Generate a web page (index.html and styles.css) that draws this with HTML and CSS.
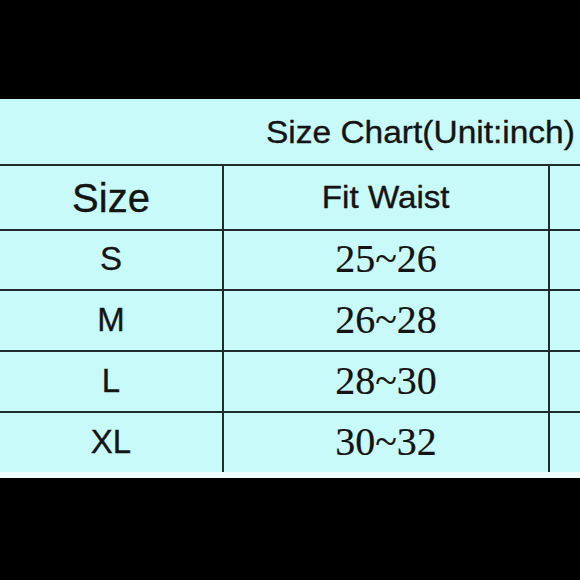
FILE: index.html
```html
<!DOCTYPE html>
<html>
<head>
<meta charset="utf-8">
<link rel="stylesheet" href="styles.css">
</head>
<body>
<div class="sheet">
  <div class="title"><span class="title-text">Size Chart(Unit:inch)</span></div>
  <div class="row head">
    <div class="cell c1"><span class="size-head">Size</span></div>
    <div class="cell c2"><span class="waist-head">Fit Waist</span></div>
    <div class="cell c3"></div>
  </div>
  <div class="row r60">
    <div class="cell c1 lbl">S</div>
    <div class="cell c2 num">25~26</div>
    <div class="cell c3"></div>
  </div>
  <div class="row r61">
    <div class="cell c1 lbl">M</div>
    <div class="cell c2 num">26~28</div>
    <div class="cell c3"></div>
  </div>
  <div class="row r61">
    <div class="cell c1 lbl">L</div>
    <div class="cell c2 num">28~30</div>
    <div class="cell c3"></div>
  </div>
  <div class="row r61">
    <div class="cell c1 lbl">XL</div>
    <div class="cell c2 num">30~32</div>
    <div class="cell c3"></div>
  </div>
  <div class="strip"></div>
</div>
</body>
</html>
```
FILE: styles.css
```css
html, body {
  margin: 0;
  padding: 0;
  background: #000;
  width: 580px;
  height: 580px;
  overflow: hidden;
}
.sheet {
  margin-top: 99px;
  background: #c9fafa;
  color: #141414;
  font-family: "Liberation Sans", Arial, sans-serif;
  -webkit-text-stroke: 0.35px #141414;
}
.title {
  height: 65px;
  display: flex;
  align-items: center;
  padding-left: 266px;
  box-sizing: border-box;
  padding-top: 2px;
  white-space: nowrap;
  overflow: hidden;
}
.title-text {
  display: inline-block;
  font-size: 31px;
  transform: scaleX(1.08);
  transform-origin: left center;
}
.row {
  display: flex;
  border-top: 2px solid #1f2b2d;
  box-sizing: border-box;
}
.row.head { height: 65px; }
.row.r60 { height: 60px; }
.row.r61 { height: 61px; }
.cell {
  display: flex;
  align-items: center;
  justify-content: center;
  box-sizing: border-box;
}
.c1 {
  width: 224px;
  border-right: 2px solid #1f2b2d;
}
.c2 {
  width: 326px;
  border-right: 2px solid #1f2b2d;
}
.c3 {
  flex: 1;
}
.size-head {
  font-size: 40px;
  padding-top: 2px;
}
.waist-head {
  display: inline-block;
  font-size: 31px;
  transform: scaleX(1.07);
}
.lbl {
  font-size: 33px;
  padding-bottom: 2px;
}
.num {
  font-family: "Liberation Serif", "Times New Roman", serif;
  font-size: 40px;
  padding-bottom: 3px;
  -webkit-text-stroke: 0.2px #141414;
}
.strip {
  height: 6px;
  background: #eefcfc;
}
```
